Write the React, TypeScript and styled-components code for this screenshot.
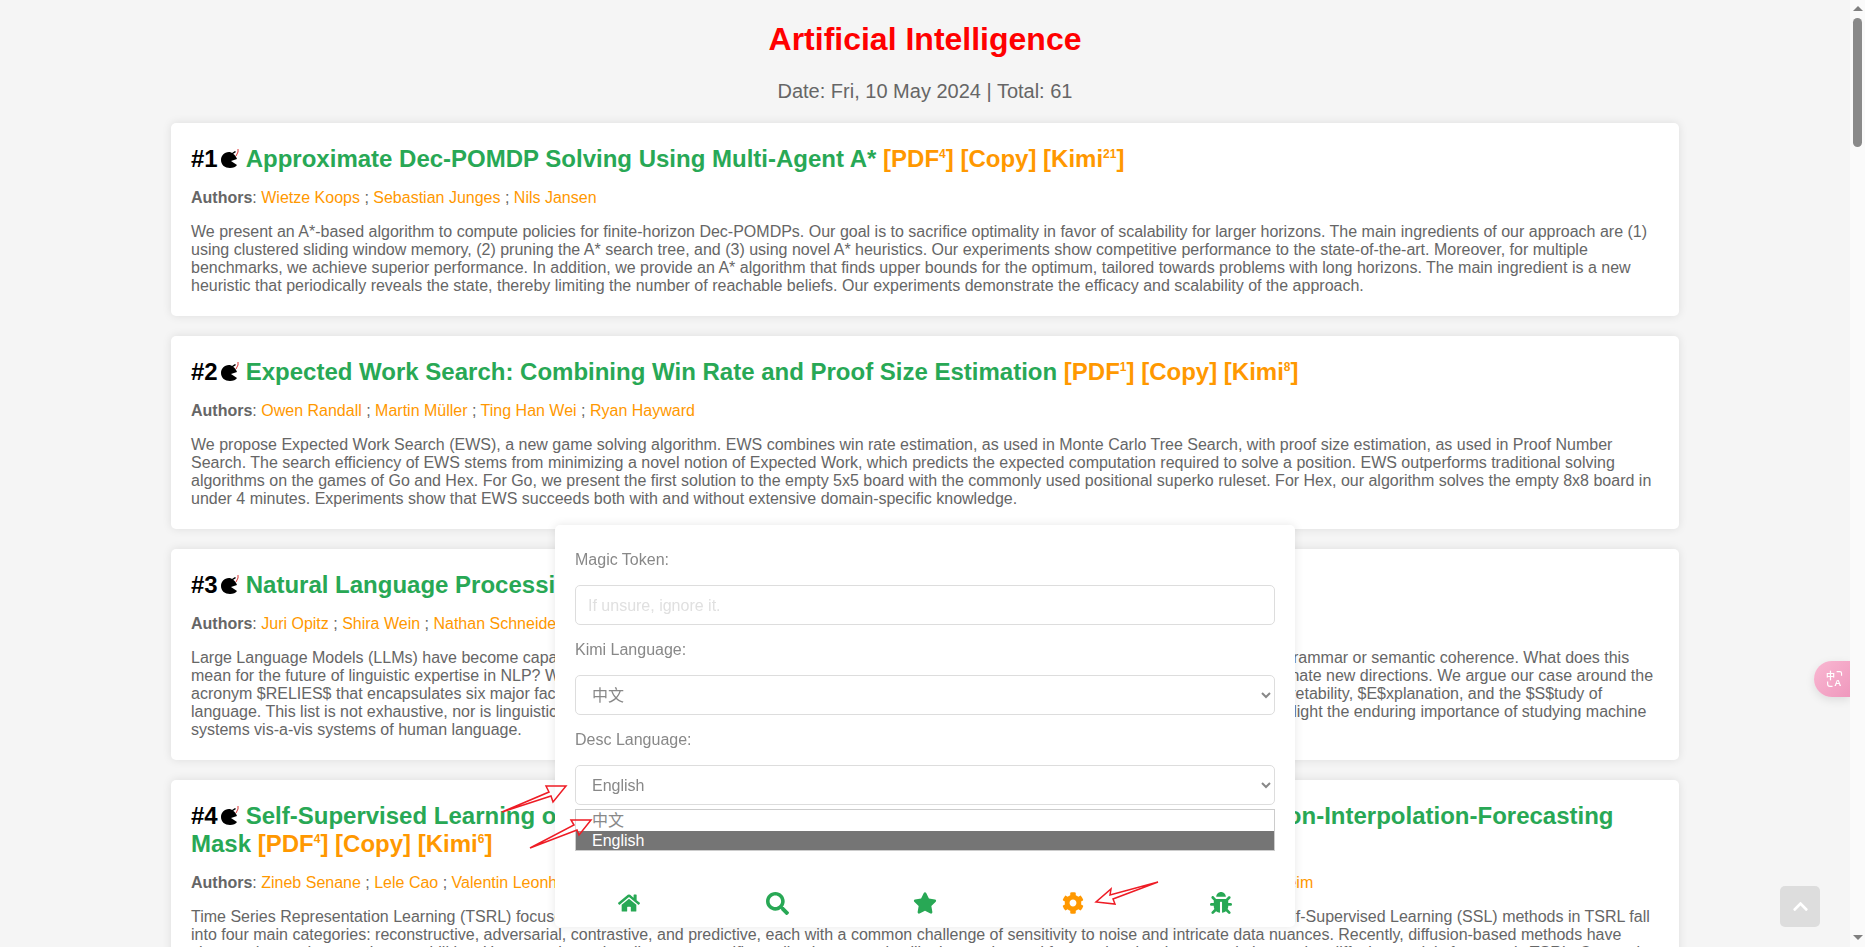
import React from 'react';
import styled, {createGlobalStyle} from 'styled-components';
import {FaBug, FaChevronUp, FaCog, FaHome, FaSearch, FaStar} from 'react-icons/fa';

const GREEN = '#28a855';
const ORANGE = '#ff9800';

const GlobalStyle = createGlobalStyle`
  body {
    margin: 0;
    background: #f5f5f5;
    font-family: "Liberation Sans", Arial, sans-serif;
    color: #666;
  }
`
const Shell = styled.div`
  padding-right: 15px;
`
const Page = styled.main`
  width: 1508px;
  margin: 0 auto;
`
const Heading = styled.h1`
  margin: 0;
  padding-top: 21px;
  font-size: 32px;
  line-height: 37px;
  font-weight: 700;
  text-align: center;
  color: #ff0000;
`
const DateLine = styled.p`
  margin: 0;
  padding: 22px 0 20px;
  font-size: 20px;
  line-height: 23px;
  text-align: center;
  color: #666;
`
const List = styled.div`
  display: flex;
  flex-direction: column;
  gap: 20px;
`
const Card = styled.article`
  padding: 22px 20px 21px;
  background: #fff;
  border-radius: 5px;
  box-shadow: 0 0 10px rgba(0, 0, 0, .1);
`
const CardTitle = styled.h2`
  margin: 0;
  font-size: 24px;
  line-height: 28px;
  font-weight: 700;
  color: ${GREEN};

  sup {
    font-size: 12px;
    line-height: 0;
    font-weight: 700;
  }
`
const Rank = styled.span`
  color: #000;
`
const RatIcon = styled.svg`
  width: 18px;
  height: 19px;
  margin: 0 7px 0 3px;
  vertical-align: -1px;
`
const Extra = styled.span`
  color: ${ORANGE};
`
const Authors = styled.p`
  margin: 16px 0 0;
  font-size: 16px;
  line-height: 18px;

  b {
    color: #666;
  }
  a {
    color: ${ORANGE};
    text-decoration: none;
  }
`
const Abstract = styled.p`
  margin: 16px 0 0;
  font-size: 16px;
  line-height: 18px;
  color: #666;
`
const Modal = styled.section`
  position: fixed;
  z-index: 5;
  bottom: 20px;
  left: 555px;

  display: flex;
  flex-direction: column;
  width: 740px;
  box-sizing: border-box;
  padding-top: 26px;

  background: #fff;
  border-radius: 5px;
  box-shadow: 0 0 10px rgba(0, 0, 0, .1);
`
const Form = styled.div`
  display: flex;
  flex-direction: column;
  gap: 16px;
  padding: 0 20px;
`
const Field = styled.div`
  position: relative;
  display: flex;
  flex-direction: column;
  gap: 16px;
`
const Label = styled.label`
  font-size: 16px;
  line-height: 18px;
  color: #888;
`
const TextInput = styled.input`
  height: 40px;
  box-sizing: border-box;
  padding: 2px 12px 0;

  font-family: inherit;
  font-size: 16px;
  color: #888;

  background: #fff;
  border: 1px solid #ddd;
  border-radius: 5px;
  outline: none;

  &::placeholder {
    color: #e0e0e0;
    opacity: 1;
  }
`
const Select = styled.select`
  height: 40px;
  box-sizing: border-box;
  padding: 0 12px;

  font-family: "Liberation Sans", "Noto Sans CJK SC", sans-serif;
  font-size: 16px;
  color: #888;

  background: #fff;
  border: 1px solid #ddd;
  border-radius: 5px;
  outline: none;
`
const OptionsPopup = styled.ul`
  position: absolute;
  top: 100%;
  left: 0;
  right: 0;

  margin: 4px 0 0;
  padding: 0;
  list-style: none;

  font-family: "Liberation Sans", "Noto Sans CJK SC", sans-serif;
  font-size: 16px;
  line-height: 19px;

  background: #fff;
  border: 1px solid #ccc;
`
const OptionRow = styled.li<{ $active?: boolean }>`
  height: ${props => props.$active ? 19 : 21}px;
  line-height: ${props => props.$active ? 19 : 21}px;
  padding-left: 16px;
  color: ${props => props.$active ? '#fff' : '#888'};
  background: ${props => props.$active ? '#757575' : 'transparent'};
`
const Nav = styled.nav`
  display: flex;
  align-items: center;
  height: 24px;
  margin-top: 86px;
  padding-bottom: 12px;
`
const NavItem = styled.a<{ $active?: boolean, $size?: number }>`
  flex: 1;
  display: flex;
  justify-content: center;
  font-size: ${props => props.$size || 22}px;
  line-height: 0;
  color: ${props => props.$active ? ORANGE : GREEN};
`
const BackToTop = styled.button`
  position: fixed;
  z-index: 4;
  right: 45px;
  bottom: 20px;

  display: flex;
  align-items: center;
  justify-content: center;
  width: 40px;
  height: 41px;
  padding: 0;

  font-size: 17px;
  color: #fff;

  background: #ddd;
  border: 0;
  border-radius: 5px;
`
const TranslateTab = styled.div`
  position: fixed;
  z-index: 4;
  top: 661px;
  right: 15px;

  display: flex;
  align-items: center;
  justify-content: center;
  width: 36px;
  height: 36px;
  padding-left: 6px;
  box-sizing: border-box;

  background: linear-gradient(135deg, #f9b8d2, #ef98bd);
  border-radius: 18px 0 0 18px;
  box-shadow: 0 3px 10px rgba(0, 0, 0, .1);
`
// headless chrome hides the native scrollbar, so this one is drawn by hand
const ScrollRail = styled.div`
  position: fixed;
  z-index: 7;
  top: 0;
  right: 0;
  bottom: 0;

  display: flex;
  flex-direction: column;
  align-items: center;
  width: 15px;
  padding: 6px 0 7px;
  box-sizing: border-box;

  background: #fafafa;
`
const ScrollArrow = styled.div<{ $down?: boolean }>`
  width: 0;
  height: 0;
  border-left: 5px solid transparent;
  border-right: 5px solid transparent;
  border-${props => props.$down ? 'top' : 'bottom'}: 5px solid #808080;
  margin-top: ${props => props.$down ? 'auto' : '0'};
`
const ScrollThumb = styled.div`
  width: 9px;
  height: 129px;
  margin-top: 7px;
  background: #8a8a8a;
  border-radius: 5px;
`
const Annotations = styled.svg`
  position: fixed;
  z-index: 6;
  top: 0;
  left: 0;
  width: 1865px;
  height: 947px;
  pointer-events: none;
`

type Paper = {
  title: string;
  pdf: number;
  kimi: number;
  authors: string[];
  summary: string;
};

const papers: Paper[] = [
  {
    title: 'Approximate Dec-POMDP Solving Using Multi-Agent A*',
    pdf: 4,
    kimi: 21,
    authors: ['Wietze Koops', 'Sebastian Junges', 'Nils Jansen'],
    summary: 'We present an A*-based algorithm to compute policies for finite-horizon Dec-POMDPs. Our goal is to sacrifice optimality in favor of scalability for larger horizons. The main ingredients of our approach are (1) using clustered sliding window memory, (2) pruning the A* search tree, and (3) using novel A* heuristics. Our experiments show competitive performance to the state-of-the-art. Moreover, for multiple benchmarks, we achieve superior performance. In addition, we provide an A* algorithm that finds upper bounds for the optimum, tailored towards problems with long horizons. The main ingredient is a new heuristic that periodically reveals the state, thereby limiting the number of reachable beliefs. Our experiments demonstrate the efficacy and scalability of the approach.',
  },
  {
    title: 'Expected Work Search: Combining Win Rate and Proof Size Estimation',
    pdf: 1,
    kimi: 8,
    authors: ['Owen Randall', 'Martin Müller', 'Ting Han Wei', 'Ryan Hayward'],
    summary: 'We propose Expected Work Search (EWS), a new game solving algorithm. EWS combines win rate estimation, as used in Monte Carlo Tree Search, with proof size estimation, as used in Proof Number Search. The search efficiency of EWS stems from minimizing a novel notion of Expected Work, which predicts the expected computation required to solve a position. EWS outperforms traditional solving algorithms on the games of Go and Hex. For Go, we present the first solution to the empty 5x5 board with the commonly used positional superko ruleset. For Hex, our algorithm solves the empty 8x8 board in under 4 minutes. Experiments show that EWS succeeds both with and without extensive domain-specific knowledge.',
  },
  {
    title: 'Natural Language Processing RELIES on Linguistics',
    pdf: 2,
    kimi: 5,
    authors: ['Juri Opitz', 'Shira Wein', 'Nathan Schneider'],
    summary: 'Large Language Models (LLMs) have become capable of generating highly fluent text in certain languages, without modules specially designed to capture grammar or semantic coherence. What does this mean for the future of linguistic expertise in NLP? We highlight several aspects in which NLP (still) relies on linguistics, or where linguistic thinking can illuminate new directions. We argue our case around the acronym $RELIES$ that encapsulates six major facets where linguistics contributes to NLP: $R$esources, $E$valuation, $L$ow-resource settings, $I$nterpretability, $E$xplanation, and the $S$tudy of language. This list is not exhaustive, nor is linguistics the main point of reference for every effort under these rubrics; but at a high level, all these facets highlight the enduring importance of studying machine systems vis-a-vis systems of human language.',
  },
  {
    title: 'Self-Supervised Learning of Time Series Representation via Diffusion Process and Imputation-Interpolation-Forecasting Mask',
    pdf: 4,
    kimi: 6,
    authors: ['Zineb Senane', 'Lele Cao', 'Valentin Leonhard Buchner', 'Yusuke Tashiro', 'Lei You', 'Pawel Herman', 'Mats Nordahl', 'Ruibo Tu', 'Vilhelm von Ehrenheim'],
    summary: 'Time Series Representation Learning (TSRL) focuses on generating informative representations for various Time Series (TS) modeling tasks. Traditional Self-Supervised Learning (SSL) methods in TSRL fall into four main categories: reconstructive, adversarial, contrastive, and predictive, each with a common challenge of sensitivity to noise and intricate data nuances. Recently, diffusion-based methods have shown advanced generative capabilities. However, they primarily target specific application scenarios like imputation and forecasting, leaving a gap in leveraging diffusion models for generic TSRL. Our work, Time Series Diffusion Embedding (TSDE), bridges this gap as the first diffusion-based SSL TSRL approach.',
  },
];

function Rat() {
  return (
    <RatIcon viewBox="0 0 18 19">
      <path d="M8 3 C3 3 0 7 0 11 C0 16 4 19 9 19 C12 19 15 18 16 16 L10 12 L16 10 C15 7 13 5 12 5 L15 3 L14 2 L11 4 C10 3 9 3 8 3 Z" fill="#000"/>
      <path d="M17 0 L17 3 L15 7" stroke="#d33" strokeWidth="1" fill="none"/>
    </RatIcon>
  );
}

function PaperCard({paper, rank}: { paper: Paper, rank: number }) {
  return (
    <Card>
      <CardTitle>
        <Rank>#{rank}</Rank>
        <Rat/>
        {paper.title}{' '}
        <Extra>[PDF<sup>{paper.pdf}</sup>] [Copy] [Kimi<sup>{paper.kimi}</sup>]</Extra>
      </CardTitle>
      <Authors>
        <b>Authors</b>:{' '}
        {paper.authors.map((name, i) => (
          <React.Fragment key={name}>
            {i > 0 && ' ; '}
            <a href="#">{name}</a>
          </React.Fragment>
        ))}
      </Authors>
      <Abstract>{paper.summary}</Abstract>
    </Card>
  );
}

function App() {
  return (
    <>
      <GlobalStyle/>
      <Shell>
        <Page>
          <Heading>Artificial Intelligence</Heading>
          <DateLine>Date: Fri, 10 May 2024 | Total: 61</DateLine>
          <List>
            {papers.map((paper, i) => <PaperCard key={paper.title} paper={paper} rank={i + 1}/>)}
          </List>
        </Page>
      </Shell>

      <Modal>
        <Form>
          <Field>
            <Label>Magic Token:</Label>
            <TextInput placeholder="If unsure, ignore it."/>
          </Field>
          <Field>
            <Label>Kimi Language:</Label>
            <Select defaultValue="zh">
              <option value="zh">中文</option>
              <option value="en">English</option>
            </Select>
          </Field>
          <Field>
            <Label>Desc Language:</Label>
            <Select defaultValue="en">
              <option value="zh">中文</option>
              <option value="en">English</option>
            </Select>
            <OptionsPopup>
              <OptionRow>中文</OptionRow>
              <OptionRow $active>English</OptionRow>
            </OptionsPopup>
          </Field>
        </Form>
        <Nav>
          <NavItem><FaHome/></NavItem>
          <NavItem $size={23}><FaSearch/></NavItem>
          <NavItem $size={24}><FaStar/></NavItem>
          <NavItem $active><FaCog/></NavItem>
          <NavItem><FaBug/></NavItem>
        </Nav>
      </Modal>

      <BackToTop><FaChevronUp/></BackToTop>

      <TranslateTab>
        <svg width="18" height="18" viewBox="0 0 22 22">
          <text x="0" y="11" fontSize="11" fontWeight="700" fill="#fff" fontFamily="Noto Sans CJK SC, sans-serif">中</text>
          <text x="10" y="20" fontSize="12" fontWeight="700" fill="#fff" fontFamily="Liberation Sans, sans-serif">A</text>
          <path d="M13 2 H17 Q19 2 19 4 V7 M2 14 V17 Q2 20 5 20 H8" stroke="#fff" strokeWidth="1.4" fill="none"/>
        </svg>
      </TranslateTab>

      <ScrollRail>
        <ScrollArrow/>
        <ScrollThumb/>
        <ScrollArrow $down/>
      </ScrollRail>

      <Annotations viewBox="0 0 1865 947">
        <g fill="#fff" fillOpacity=".25" stroke="#ee1c25" strokeWidth="1.5" strokeLinejoin="miter">
          <path d="M502 812 L549 792 L546 786 L566 786 L553 802 L551 796 Z"/>
          <path d="M530 848 L574 825 L571 820 L591 820 L579 835 L577 830 Z"/>
          <path d="M1158 882 L1110 895 L1111 889 L1096 902 L1115 904 L1113 899 Z"/>
        </g>
      </Annotations>
    </>
  );
}

export default App;
